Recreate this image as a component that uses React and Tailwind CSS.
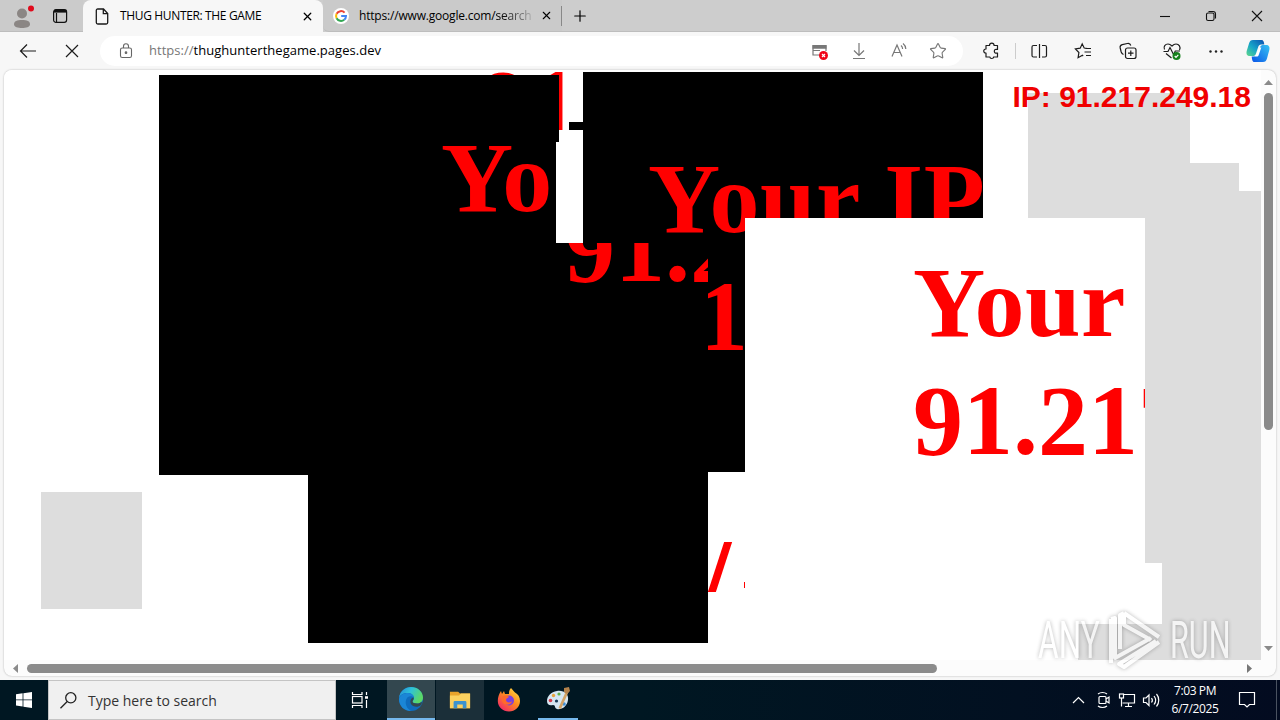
import React from "react";
import { X, Plus, Star } from "lucide-react";

const uiFont = "font-['Open_Sans','Noto_Sans',sans-serif]";
const shoutText =
  "absolute whitespace-nowrap font-['Liberation_Serif',serif] text-[100px] leading-[118px] font-bold text-[#ff0000]";

// One popup thrown on the page canvas; later ones cover earlier ones
function Pane({ className, textClass, children }) {
  return (
    <div className={`absolute overflow-hidden ${className}`}>
      {children && <p className={`${shoutText} ${textClass}`}>{children}</p>}
    </div>
  );
}

function GoogleLogo() {
  return (
    <svg className="h-4 w-4" viewBox="0 0 16 16" fill="none" strokeWidth="2">
      <circle cx="8" cy="8" r="8" fill="#fff" />
      <path d="M11.6 4.6A5 5 0 0 0 3.6 5.8" stroke="#ea4335" />
      <path d="M3.6 5.8a5 5 0 0 0 0 4.4" stroke="#fbbc05" />
      <path d="M3.6 10.2a5 5 0 0 0 7.6 1.6" stroke="#34a853" />
      <path d="M11.2 11.8A5 5 0 0 0 13 8H8.2" stroke="#4285f4" />
    </svg>
  );
}

function TabStrip() {
  return (
    <div className="flex h-8 shrink-0 bg-[#cdcdcd]">
      <div className="flex w-[83px] items-center border-b border-[#bdbdbd] bg-[#cbcbcb]">
        <svg className="ml-3 h-7 w-6" viewBox="0 0 24 28">
          <circle cx="10" cy="11.500" r="5" fill="#8b8684" />
          <path d="M2 22.500C2 19 5 18 10 18s8 1 8 4.500c0 2.500-4 3.500-8 3.500s-8-1-8-3.500z" fill="#8b8684" />
          <circle cx="19" cy="6.500" r="3" fill="#e00b1c" />
        </svg>
        <svg className="ml-4 h-4 w-4" viewBox="0 0 16 16" fill="none" stroke="#111" strokeWidth="1.2">
          <rect x="1.6" y="1.6" width="13" height="12.8" rx="2.4" />
          <path d="M2 3.2h12.400" strokeWidth="2.800" />
          <path d="M4.500 5v9" />
        </svg>
      </div>
      <div className="flex w-[240px] items-center rounded-t-lg bg-[#f7f7f7] pl-3">
        <svg className="h-[17px] w-[15px]" viewBox="0 0 15 17" fill="none" stroke="#1a1a1a" strokeWidth="1.3">
          <path d="M8.500 1H2.800C1.800 1 1.300 1.500 1.300 2.500v12c0 1 .5 1.500 1.500 1.500h8.400c1 0 1.500-.5 1.500-1.500V5.500zM8.300 1v4.700h4.400" />
        </svg>
        <span className="ml-[10px] w-[181px] text-[12px] tracking-[-0.35px] whitespace-nowrap">THUG HUNTER: THE GAME</span>
        <X className="h-[13px] w-[13px]" strokeWidth={2.4} />
      </div>
      <div className="flex w-[239px] items-center rounded-bl-md border-b border-[#bdbdbd] bg-[#cacaca] pl-[10px]">
        <GoogleLogo />
        <span className="ml-[10px] w-[172px] text-[12px] tracking-[-0.19px] whitespace-nowrap">
          https://www.google.com/<span className="bg-linear-to-r from-black to-[#aaa] bg-clip-text text-transparent">search</span>
        </span>
        <X className="ml-[9px] h-[13px] w-[13px]" strokeWidth={2} />
      </div>
      <div className="flex flex-1 items-center border-b border-[#bdbdbd]">
        <div className="-ml-px h-5 w-px bg-[#888]" />
        <Plus className="ml-[9px] h-[18px] w-[18px]" strokeWidth={1.6} />
        <svg className="ml-auto h-4 w-[120px]" viewBox="0 0 120 16" fill="none" stroke="#111" strokeWidth="1.1">
          <path d="M0 8.500h10" />
          <rect x="46.500" y="5" width="7.500" height="7.500" rx="1.600" />
          <path d="M48.500 3.500h4.500c1.500 0 2.500 1 2.500 2.500v4.500" />
          <path d="m92 3 10 10m0-10-10 10" />
        </svg>
      </div>
    </div>
  );
}

function ToolbarIcon({ children, className = "" }) {
  return (
    <svg className={`h-5 w-5 shrink-0 ${className}`} viewBox="0 0 20 20" fill="none" stroke="currentColor" strokeWidth="1.2">
      {children}
    </svg>
  );
}

function CopilotLogo() {
  return (
    <svg className="h-6 w-6" viewBox="0 0 24 24">
      <defs>
        <linearGradient id="cpA" x1="0" y1="1" x2="1" y2="0">
          <stop offset="0" stopColor="#5fd88a" />
          <stop offset=".45" stopColor="#16a5c9" />
          <stop offset="1" stopColor="#0b4fb0" />
        </linearGradient>
        <linearGradient id="cpB" x1="0" y1="1" x2="1" y2="0">
          <stop offset="0" stopColor="#0a55e8" />
          <stop offset="1" stopColor="#36c3f2" />
        </linearGradient>
      </defs>
      <path d="M7 1h8.500c2 0 2.300 1.500 2.800 4.500h-3c-1.800 0-2.600 1-3.200 2.800L10 14.500c-.6 2-1.600 2.500-3.600 2.500H4c-3 0-4-2-3.300-5L3 4.500C3.700 2 4.800 1 7 1z" fill="url(#cpA)" />
      <path d="M17 23H8.500c-2 0-2.300-1.500-2.800-5.500h2.500c1.800 0 2.600-1 3.200-2.800L14 8.500c.6-2 1.600-2.500 3.600-2.500h2.400c3 0 4 2 3.300 5L21 19.500c-.7 2.500-1.800 3.500-4 3.500z" fill="url(#cpB)" />
      <path d="M13.500 8.500h1.800l-2.600 7.500c-.4 1-1 1.500-2 1.500H9z" fill="#fff" />
    </svg>
  );
}

function Toolbar() {
  return (
    <div className="flex h-[38px] shrink-0 items-center bg-[#f7f7f7] text-[#1c1c1c]">
      <ToolbarIcon className="ml-[18px]">
        <path d="M18 10H2.500m6.500-6.500L2.500 10 9 16.500" />
      </ToolbarIcon>
      <ToolbarIcon className="ml-6">
        <path d="m4 4 12 12M16 4 4 16" />
      </ToolbarIcon>
      <div className="ml-[18px] flex h-[30px] w-[863px] items-center rounded-full bg-white pl-[19px] text-[#777]">
        <svg className="h-4 w-[14px]" viewBox="0 0 14 16" fill="none" stroke="#666" strokeWidth="1.1">
          <rect x="1.500" y="5" width="11" height="9.500" rx="1.800" />
          <path d="M4.500 5V3.300a2.500 2.500 0 0 1 5 0V5" />
          <circle cx="7" cy="9.700" r=".8" fill="#666" />
        </svg>
        <span className="ml-4 flex-1 text-[13px] tracking-[0.03px] whitespace-nowrap text-[#777]">
          https://<span className="text-black">thughunterthegame.pages.dev</span>
        </span>
        <div className="flex items-center gap-5 pr-4">
          <ToolbarIcon>
            <path d="M11 14H3V4.500h13V10M3 9.500h7" />
            <path d="M2.500 6h14" strokeWidth="3.500" />
            <circle cx="13.500" cy="14.500" r="4.500" fill="#f0061a" stroke="none" />
            <path d="m12 13 3 3m0-3-3 3" stroke="#fff" />
          </ToolbarIcon>
          <ToolbarIcon className="-ml-px">
            <path d="M10 2v12M5 9.500l5 5 5-5M4 17.500h12" />
          </ToolbarIcon>
          <ToolbarIcon>
            <path d="M3 15.500 8 4l5 11.500M4.800 11.500h6.400M12 4.500c1 .8 1.600 2 1.600 3.500M14 2.500c1.800 1.400 2.800 3.300 2.800 5.500" />
          </ToolbarIcon>
          <Star className="h-[18px] w-[18px]" strokeWidth={1.5} />
        </div>
      </div>
      <ToolbarIcon className="ml-[18px]">
        <path d="M8.500 4.500a2.300 2.300 0 0 1 4.600 0h3.400v4c-2-.6-3.200.3-3.200 1.800s1.200 2.300 3.200 1.700v4h-4c.2 2-3.600 2-3.600 0H5v-4c-3 .3-3-4.200 0-4V4.500z" strokeLinejoin="round" />
      </ToolbarIcon>
      <div className="ml-[14px] h-4 w-px bg-[#ccc]" />
      <ToolbarIcon className="ml-[13px]">
        <path d="M10.500 3v14M8 4.500H4.500A1.500 1.500 0 0 0 3 6v8.500A1.500 1.500 0 0 0 4.500 16H8M13 4.500h3A1.500 1.500 0 0 1 17.500 6v8.500A1.500 1.500 0 0 1 16 16h-3" />
      </ToolbarIcon>
      <ToolbarIcon className="ml-6">
        <path d="M14.500 7.500 11.200 7 9.200 2.800 7.200 7.200 2.400 8l3.500 3.500-.8 5.200 4.300-2.400.8.600M12.500 7.500H18M11.500 11H18M13 14.500h5" />
      </ToolbarIcon>
      <ToolbarIcon className="ml-[25px]">
        <rect x="7.500" y="7" width="10.500" height="10.500" rx="2" />
        <path d="M12.800 9.500v5.500M10 12.200h5.500M5.500 13.500C4 13 3.500 12 3.200 11L2.200 7C1.800 5.200 2.500 4 4.300 3.600l5-1.100c1.700-.4 3 .3 3.500 2" />
      </ToolbarIcon>
      <ToolbarIcon className="ml-6">
        <path d="M2.500 8.500C1 5.500 3.500 3 6 3c2 0 3 1 4 2 1-1 2-2 4-2 3 0 5 3 3.500 6M1.500 10.500H6l2-4 3.500 7 1.800-3.500H18M4 12.500l5.500 4.500" />
        <circle cx="14.500" cy="15" r="4" fill="#15801c" stroke="none" />
        <path d="m12.700 15 1.300 1.300 2.300-2.500" stroke="#fff" />
      </ToolbarIcon>
      <svg className="ml-[27px] h-5 w-[14px]" viewBox="0 0 14 20" fill="#222">
        <circle cx="1.500" cy="10.500" r="1.200" />
        <circle cx="7" cy="10.500" r="1.200" />
        <circle cx="12.500" cy="10.500" r="1.200" />
      </svg>
      <div className="ml-[23px]">
        <CopilotLogo />
      </div>
    </div>
  );
}

function PageCanvas() {
  return (
    <div className="relative h-[590px] w-[1257px] overflow-hidden rounded-tl-lg bg-white">
      {/* grey popups still loading */}
      <Pane className="left-[37px] top-[422px] h-[117px] w-[101px] bg-[#dddddd]" />
      <Pane className="left-[1024px] top-[23px] h-[400px] w-[162px] bg-[#dddddd]" />
      <Pane className="left-[1024px] top-[93px] h-[400px] w-[211px] bg-[#dddddd]" />
      <Pane className="left-[1074px] top-[121px] h-[470px] w-[183px] bg-[#dddddd]" />
      <Pane className="left-[758px] top-[493px] h-[61px] w-[400px] bg-white" />

      {/* black and white popups */}
      <Pane className="left-[400px] top-[2px] h-[58px] w-[165px] bg-white" textClass="left-[75px] top-[-26px]">91</Pane>
      <Pane className="left-[565px] top-[52px] h-[8px] w-[14px] bg-black" />
      <Pane className="left-[341px] top-[170px] h-[232px] w-[400px] bg-black" textClass="left-[353px] top-[18px]">1</Pane>
      <Pane className="left-[304px] top-[173px] h-[400px] w-[400px] bg-black" />
      <Pane className="left-[155px] top-[5px] h-[400px] w-[400px] bg-black" />
      <Pane className="left-[155px] top-[72px] h-[101px] w-[397px] bg-black" textClass="left-[282px] top-[-23px]">Yo</Pane>
      <Pane className="left-[552px] top-[72px] h-[101px] w-[27px] bg-white" />
      <Pane className="left-[555px] top-[173px] h-[232px] w-[149px] bg-black" textClass="left-[6px] top-[-54px]">91.2</Pane>
      <Pane className="left-[579px] top-[2px] h-[171px] w-[400px] bg-black" textClass="left-[65px] top-[68px] tracking-[0.4px]">Your IP</Pane>
      <Pane className="left-[741px] top-[148px] h-[400px] w-[400px] bg-white" textClass="left-[168px] top-[26px] tracking-[0.4px]">
        Your
        <br />
        <span className="tracking-normal">91.217</span>
      </Pane>

      {/* slivers of a covered popup */}
      <div className="absolute left-[712px] top-[472px] h-[50px] w-[8px] -skew-x-[18deg] bg-[#ff0000]" />
      <div className="absolute left-[740px] top-[512px] h-[6px] w-px bg-[#ff0000]" />

      <p className="absolute right-[10px] top-[9px] font-['Liberation_Sans',sans-serif] text-[30px] leading-9 font-bold whitespace-nowrap text-[#f00000]">
        IP: 91.217.249.18
      </p>
    </div>
  );
}

function Watermark() {
  return (
    <div className="absolute left-[1038px] top-[609px] flex h-16 w-[196px] items-center opacity-70 drop-shadow-[0_0_2px_rgba(0,0,0,0.4)]">
      <span className="w-[66px] origin-left scale-x-[0.62] font-['Roboto',sans-serif] text-[51px] leading-[64px] text-white">ANY</span>
      <svg className="h-16 w-[58px]" viewBox="0 0 58 64" fill="none" stroke="#fff" strokeWidth="4" strokeLinejoin="round">
        <path d="M20 4v12l27 15M20 4l35 24M20 4l-4 2v34M7 10v44M7 10l4-1v40l36-20M55 33 20 58l-5-3 37-23" />
      </svg>
      <span className="ml-2 w-[62px] origin-left scale-x-[0.6] font-['Roboto',sans-serif] text-[51px] leading-[64px] text-white">RUN</span>
    </div>
  );
}

function Viewport() {
  return (
    <div className="flex flex-1 bg-[#f7f7f7] px-1 pb-[4px]">
      <div className="flex w-full flex-col rounded-lg bg-[#fcfcfc] shadow-[0_0_2px_rgba(0,0,0,0.3)]">
        <div className="flex">
          <PageCanvas />
          <div className="flex h-[590px] w-[15px] flex-col items-center pt-[10px]">
            <svg className="h-[5px] w-[9px]" viewBox="0 0 9 5" fill="#8a8a8a">
              <path d="M4.500 0 9 5H0z" />
            </svg>
            <div className="mt-2 h-[337px] w-[9px] rounded-full bg-[#8b8b8b]" />
            <svg className="mt-[216px] h-[5px] w-[9px]" viewBox="0 0 9 5" fill="#8a8a8a">
              <path d="M4.500 5 9 0H0z" />
            </svg>
          </div>
        </div>
        <div className="flex h-4 items-center pl-[9px]">
          <svg className="h-[9px] w-[5px]" viewBox="0 0 5 9" fill="#8a8a8a">
            <path d="M0 4.500 5 0v9z" />
          </svg>
          <div className="ml-[9px] h-[9px] w-[910px] rounded-full bg-[#8b8b8b]" />
          <svg className="ml-[310px] h-[9px] w-[5px]" viewBox="0 0 5 9" fill="#777">
            <path d="M5 4.500 0 0v9z" />
          </svg>
        </div>
      </div>
    </div>
  );
}

function EdgeLogo() {
  return (
    <svg className="h-6 w-6" viewBox="0 0 24 24">
      <defs>
        <linearGradient id="edgeTop" x1="0" y1="0" x2="1" y2="0.4">
          <stop offset="0" stopColor="#2386d8" />
          <stop offset=".5" stopColor="#2fc2d8" />
          <stop offset="1" stopColor="#5bd866" />
        </linearGradient>
      </defs>
      <circle cx="12" cy="12" r="12" fill="#0f6cbd" />
      <path d="M0 11C1 4 6 0 12 0c7 0 12 5 12 10.500 0 4-3 6-6 6-3 0-4.500-1-4.500-2 0-.8 1.500-1.500 1.500-3.500C15 8 12 6 8.500 6 4 6 1 8 0 11z" fill="url(#edgeTop)" />
      <path d="M9 10c-3 2-4 10 3 14-7 0-12-5-12-12 1-4 5-6 9-6 4 0 6 3 6 5-1-2-4-2.500-6-1z" fill="#1b86d6" />
      <path d="M13.500 14.500c0 1 1.500 2 4.500 2 2 0 3.500-.7 4.500-1.500.8.500.2 2-.5 3-2.500 2.500-8 2.500-10-1-1.500-3 0-6 2.500-6.500.8 1.500-1 3-1 4z" fill="#33474f" />
    </svg>
  );
}

function ExplorerLogo() {
  return (
    <svg className="h-5 w-[22px]" viewBox="0 0 24 20">
      <path d="M1 1h9l2 2h11v16H1z" fill="#e9a32b" />
      <path d="M1 5h10l2-2h10v16H1z" fill="#fcd15f" />
      <path d="M5 19v-6.500A1.500 1.500 0 0 1 6.500 11h11a1.500 1.500 0 0 1 1.500 1.500V19h-4v-4H9v4z" fill="#3c93cf" />
    </svg>
  );
}

function FirefoxLogo() {
  return (
    <svg className="h-6 w-6" viewBox="0 0 24 24">
      <defs>
        <linearGradient id="fox" x1="1" y1="0" x2="0.2" y2="1">
          <stop offset="0" stopColor="#ffe94a" />
          <stop offset=".5" stopColor="#ff8a1e" />
          <stop offset="1" stopColor="#f2256b" />
        </linearGradient>
      </defs>
      <path d="M14 0c2 2 3 3.500 4 4.500C21 6 23 9 23 13c0 6-5 10.500-11 10.500S.8 19 .8 13C.8 9 2 6 4 3l1 3 2-3 1 3 4 0c0-2 0-4 2-6z" fill="url(#fox)" />
      <circle cx="12" cy="12.500" r="5" fill="#7a3fe0" />
      <path d="M5 9c2-2 5-2 7 0-1 1-3 1-3 3 0 3 5 3 6 1 0 4-8 6-10 0z" fill="#ff6a2b" />
    </svg>
  );
}

function PaintLogo() {
  return (
    <svg className="h-6 w-6" viewBox="0 0 24 24">
      <path d="M11 4c7-1 12 3 11 9-1 7-7 10-11 9-3-1-1-4-4-4-3 1-6 0-6-4 0-5 4-9 10-10z" fill="#d5e6f2" />
      <circle cx="4.500" cy="13.500" r="1.800" fill="#d63b4b" />
      <circle cx="7.500" cy="8.500" r="1.700" fill="#e8a23c" />
      <circle cx="13" cy="7" r="1.600" fill="#61b04c" />
      <circle cx="10.500" cy="14" r="1.600" fill="#163a57" />
      <circle cx="18" cy="17" r="1.800" fill="#3f8ed6" />
      <path d="M20 4 12.500 21l2.500 1L22.500 5z" fill="#d3a468" />
      <path d="m18 1 5-1 1 4-3 3-3-2z" fill="#b3824c" />
    </svg>
  );
}

function Taskbar() {
  return (
    <div className="flex h-10 shrink-0 bg-linear-to-r from-[#001722] via-[#001722] to-[#030b20] text-white">
      <div className="flex w-12 items-center justify-center">
        <svg className="h-4 w-4" viewBox="0 0 16 16" fill="#fff">
          <path d="M0 2.300 6.600 1.300v6.200H0zM7.400 1.200 16 0v7.500H7.400zM0 8.300h6.600v6.300L0 13.600zM7.400 8.300H16V16l-8.600-1.200z" />
        </svg>
      </div>
      <div className="flex w-[288px] items-center border border-[#c4c4c4] bg-[#f0f0f0] pl-[11px] text-[#333]">
        <svg className="h-[17px] w-[17px]" viewBox="0 0 17 17" fill="none" stroke="#222" strokeWidth="1.300">
          <circle cx="10.800" cy="5.800" r="5.100" />
          <path d="M7.200 9.500.5 16.300" />
        </svg>
        <span className="ml-[11px] text-[14px]">Type here to search</span>
      </div>
      <div className="flex w-[51px] items-center pl-[15px]">
        <svg className="h-4 w-[18px]" viewBox="0 0 18 16" fill="none" stroke="#fff" strokeWidth="1.200">
          <path d="M1.500 0v2.500h9.500V0M1.500 16v-2.500h9.500V16M15.500 0v3M15.500 8v8" />
          <rect x="1.500" y="4.500" width="9.500" height="6.500" />
          <path d="M14 5.500h3" strokeWidth="2.500" />
        </svg>
      </div>
      <div className="flex w-12 items-center justify-center border-b-2 border-[#76b9ed] bg-[#33474f]">
        <EdgeLogo />
      </div>
      <div className="ml-px flex w-12 items-center justify-center bg-[#1b2f39]">
        <ExplorerLogo />
      </div>
      <div className="flex w-[50px] items-center justify-center">
        <FirefoxLogo />
      </div>
      <div className="ml-[4px] flex w-10 items-center justify-center border-b-2 border-[#76b9ed]">
        <PaintLogo />
      </div>
      <svg className="ml-auto h-10 w-[90px]" viewBox="0 0 90 40" fill="none" stroke="#fff" strokeWidth="1.200">
        <path d="m2 23 5.500-5.500L13 23" />
        <rect x="28" y="16.500" width="7" height="7" rx="1" />
        <path d="m35 19 3-2v6l-3-2M27 14c2.500-2 6.500-2 9 0M27 26c2.500 2 6.500 2 9 0" />
        <path d="M53 14.500h10.500v8.500h-12M57.500 23v3.500M54 26.500h7" />
        <rect x="48.500" y="14" width="4" height="4" />
        <path d="M50.500 18v8.500" />
        <path d="M72.500 18h2.500l3-3v10.500l-3-3h-2.500zM80.500 18c1 1.300 1 3.200 0 4.500M83 16c2 2.500 2 6 0 8.500M85.500 14c3 3.500 3 9 0 12.500" />
      </svg>
      <div className="ml-px flex w-[66px] flex-col items-center pt-[2px] text-[12px] leading-[18px] tracking-[-0.4px]">
        <span>7:03 PM</span>
        <span>6/7/2025</span>
      </div>
      <svg className="ml-[10px] h-10 w-[36px]" viewBox="0 0 36 40" fill="none" stroke="#fff" strokeWidth="1.200">
        <path d="M1.500 12.500h15v12h-5L9 27l-2.500-2.500h-5z" />
      </svg>
      <div className="ml-[2px] w-[4px] border-l border-[#4a5260]" />
    </div>
  );
}

function App() {
  return (
    <div className={`relative flex h-[720px] w-[1280px] flex-col overflow-hidden bg-[#f7f7f7] text-black ${uiFont}`}>
      <TabStrip />
      <Toolbar />
      <Viewport />
      <Taskbar />
      <Watermark />
    </div>
  );
}

export default App;
